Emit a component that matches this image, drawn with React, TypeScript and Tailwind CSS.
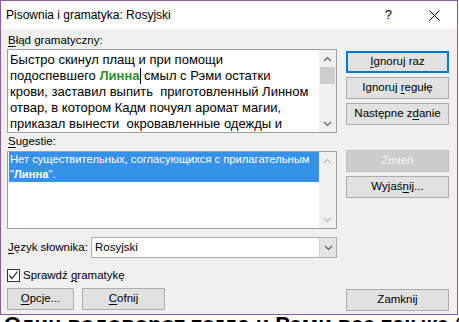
import React from "react"

const U = ({ children }: { children: React.ReactNode }) => (
    <span className="underline underline-offset-[2px] decoration-[1px]">{children}</span>
)

const Chevron = ({ dir, color = "#606060" }: { dir: "up" | "down"; color?: string }) => (
    <svg width="9" height="6" viewBox="0 0 9 6">
        <polyline
            points={dir === "up" ? "1,5 4.5,1.5 8,5" : "1,1 4.5,4.5 8,1"}
            fill="none"
            stroke={color}
            strokeWidth="1.2"
        />
    </svg>
)

const Btn = ({ children, primary, disabled, className = "" }: { children: React.ReactNode; primary?: boolean; disabled?: boolean; className?: string }) => (
    <div
        className={`h-[22px] flex items-center justify-center ${
            primary
                ? "border-2 border-[#0078d7] bg-[#e1e1e1] text-black"
                : disabled
                ? "border border-[#bfbfbf] bg-[#cccccc] text-[#f4f4f4]"
                : "border border-[#adadad] bg-[#e1e1e1] text-black"
        } ${className}`}
    >
        {children}
    </div>
)

export default function App() {
    return (
        <div className="w-[459px] h-[322px] bg-white overflow-hidden flex flex-col font-['Liberation_Sans',Arial,sans-serif] text-[11.5px] text-black">
            <div className="w-[458px] h-[315px] shrink-0 border border-[#8e5aa8] flex flex-col bg-[#f0f0f0]">
                {/* title bar */}
                <div className="h-[28px] shrink-0 bg-white flex items-center pl-[5px] text-[12px]">
                    <span>Pisownia i gramatyka: Rosyjski</span>
                    <span className="ml-auto mr-[37px] text-[13px]">?</span>
                    <svg width="11" height="11" viewBox="0 0 11 11" className="mr-[17px]">
                        <line x1="0.5" y1="0.5" x2="10.5" y2="10.5" stroke="#000" strokeWidth="1" />
                        <line x1="10.5" y1="0.5" x2="0.5" y2="10.5" stroke="#000" strokeWidth="1" />
                    </svg>
                </div>

                <div className="flex flex-1 pl-[6px] pr-[7px] pb-[3px] gap-[9px]">
                    {/* left column */}
                    <div className="w-[330px] flex flex-col">
                        <div className="h-[16px] mt-[3px] leading-[16px] pl-[1px]">
                            <U>B</U>łąd gramatyczny:
                        </div>
                        <div className="h-[84px] mt-[1px] border border-[#a0a0a0] bg-white flex">
                            <div className="flex-1 pl-[2px] pt-[2px] text-[13px] leading-[16px] whitespace-pre overflow-hidden">
                                <div>Быстро скинул плащ и при помощи</div>
                                <div className="flex items-center">
                                    <span>подоспевшего </span>
                                    <span className="font-bold text-[#2f8f2f]">Линна</span>
                                    <span className="inline-block w-px h-[16px] bg-black" />
                                    <span> смыл с Рэми остатки</span>
                                </div>
                                <div>крови, заставил выпить  приготовленный Линном</div>
                                <div>отвар, в котором Кадм почуял аромат магии,</div>
                                <div>приказал вынести  окровавленные одежды и</div>
                            </div>
                            <div className="w-[17px] bg-[#f0f0f0] flex flex-col">
                                <div className="h-[17px] flex items-center justify-center">
                                    <Chevron dir="up" />
                                </div>
                                <div className="h-[17px] mx-[1px] bg-[#cdcdcd]" />
                                <div className="flex-1" />
                                <div className="h-[17px] flex items-center justify-center">
                                    <Chevron dir="down" />
                                </div>
                            </div>
                        </div>

                        <div className="h-[16px] leading-[16px] pl-[1px]">
                            <U>S</U>ugestie:
                        </div>
                        <div className="h-[78px] mt-[2px] border border-[#a0a0a0] bg-white flex">
                            <div className="flex-1 pl-[1px] min-w-0">
                                <div className="bg-[#3592e8] text-white text-[11.2px] leading-[15px] pl-[1px] whitespace-nowrap">
                                    <div>Нет существительных, согласующихся с прилагательным</div>
                                    <div>
                                        "<span className="font-bold">Линна</span>".
                                    </div>
                                </div>
                            </div>
                            <div className="w-[17px] bg-[#f0f0f0] flex flex-col">
                                <div className="h-[17px] flex items-center justify-center">
                                    <Chevron dir="up" color="#c0c0c0" />
                                </div>
                                <div className="flex-1" />
                                <div className="h-[17px] flex items-center justify-center">
                                    <Chevron dir="down" color="#c0c0c0" />
                                </div>
                            </div>
                        </div>

                        <div className="mt-[8px] h-[21px] flex items-center">
                            <div className="w-[84px] pl-[1px] whitespace-nowrap">
                                <U>J</U>ęzyk słownika:
                            </div>
                            <div className="flex-1 h-full border border-[#adadad] bg-white flex">
                                <div className="flex-1 pl-[3px] flex items-center">Rosyjski</div>
                                <div className="w-[17px] bg-[#e5e5e5] border-l border-[#d0d0d0] flex items-center justify-center">
                                    <Chevron dir="down" />
                                </div>
                            </div>
                        </div>

                        <div className="mt-[10px] h-[15px] flex items-center gap-[3px]">
                            <div className="w-[13px] h-[13px] border border-[#333333] bg-white flex items-center justify-center">
                                <svg width="11" height="11" viewBox="0 0 11 11">
                                    <polyline points="1.5,5.5 4,8.5 9.5,1.5" fill="none" stroke="#222" strokeWidth="1.2" />
                                </svg>
                            </div>
                            <span>
                                Sprawdź <U>g</U>ramatykę
                            </span>
                        </div>

                        <div className="mt-[5px] flex gap-[8px]">
                            <Btn className="w-[67px]">
                                <span>
                                    <U>O</U>pcje...
                                </span>
                            </Btn>
                            <Btn className="w-[83px]">
                                <span>
                                    <U>C</U>ofnij
                                </span>
                            </Btn>
                        </div>
                    </div>

                    {/* right column */}
                    <div className="w-[103px] flex flex-col">
                        <Btn primary className="w-full mt-[22px]">
                            <span>
                                <U>I</U>gnoruj raz
                            </span>
                        </Btn>
                        <Btn className="w-full mt-[4px]">
                            <span>
                                Ignoruj <U>r</U>egułę
                            </span>
                        </Btn>
                        <Btn className="w-full mt-[4px]">
                            <span>
                                Następne z<U>d</U>anie
                            </span>
                        </Btn>
                        <Btn disabled className="w-full mt-[25px]">
                            Zmień
                        </Btn>
                        <Btn className="w-full mt-[4px]">
                            <span>
                                Wyjaś<U>n</U>ij...
                            </span>
                        </Btn>
                        <Btn className="w-full mt-auto">Zamknij</Btn>
                    </div>
                </div>
            </div>

            {/* document behind the dialog */}
            <div className="h-[7px] overflow-hidden pl-[4px] whitespace-nowrap font-bold text-[22px] leading-[22px]">
                <div className="mt-[-1px]">Один водоворот тогда и Рэми все так же был</div>
            </div>
        </div>
    )
}
